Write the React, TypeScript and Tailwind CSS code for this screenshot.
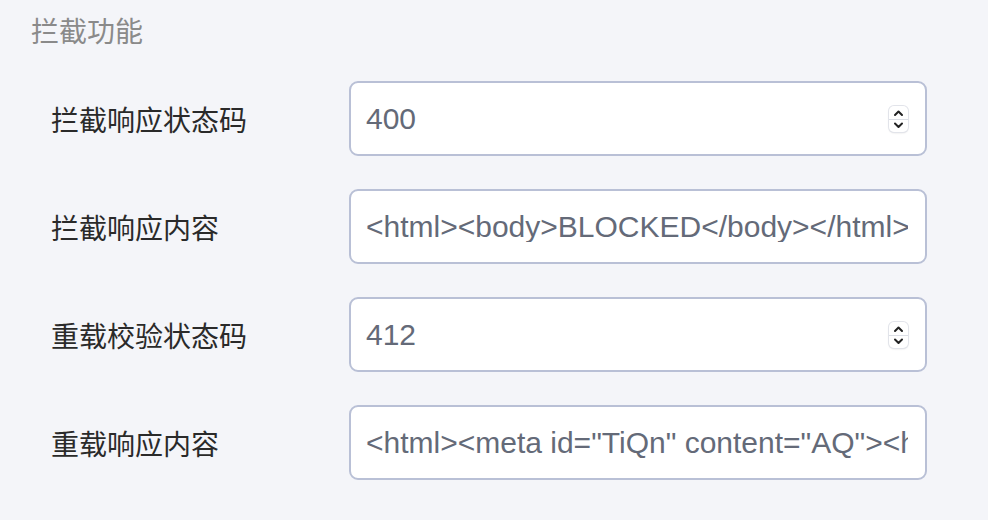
import React from "react";

const Spinner = () => (
  <div className="flex h-[26px] w-[19px] shrink-0 flex-col items-center justify-center rounded-[5px] bg-white shadow-[0_0_0_1px_#e2e4ea,0_1px_2px_rgba(0,0,0,0.15)]">
    <svg width="19" height="13" viewBox="0 0 19 13" className="block">
      <path d="M6 9 L9.5 5.5 L13 9" fill="none" stroke="#222" strokeWidth="2" strokeLinecap="round" strokeLinejoin="round" />
    </svg>
    <div className="h-px w-full bg-[#dcdfe6]" />
    <svg width="19" height="12" viewBox="0 0 19 12" className="block">
      <path d="M6 3.5 L9.5 7 L13 3.5" fill="none" stroke="#222" strokeWidth="2" strokeLinecap="round" strokeLinejoin="round" />
    </svg>
  </div>
);

const Row = ({ label, value, spin }: { label: string; value: string; spin?: boolean }) => (
  <div className="flex items-center">
    <div className="w-[349px] shrink-0 pl-[51px] text-[28px] leading-none text-[#2a2a2a]">{label}</div>
    <div className="flex h-[75px] w-[578px] shrink-0 items-center overflow-hidden rounded-[9px] border-2 border-[#b9c0d6] bg-white pl-[15px] pr-[17px]">
      {spin ? (
        <>
          <div className="flex-1 whitespace-nowrap font-['Liberation_Sans',sans-serif] text-[30px] leading-none text-[#646a78]">
            {value}
          </div>
          <Spinner />
        </>
      ) : (
        <div className="min-w-0 flex-1 overflow-hidden whitespace-nowrap font-['Liberation_Sans',sans-serif] text-[30px] leading-none text-[#646a78]">
          {value}
        </div>
      )}
    </div>
  </div>
);

export default function App() {
  return (
    <div className="h-[520px] w-[988px] overflow-hidden bg-[#f4f5f9] font-['Noto_Sans_CJK_SC','Liberation_Sans',sans-serif]">
      <div className="pl-[31px] pt-[15px] text-[28px] leading-[30px] text-[#8a8a8a]">拦截功能</div>
      <div className="mt-[36px] flex flex-col gap-[33px]">
        <Row label="拦截响应状态码" value="400" spin />
        <Row label="拦截响应内容" value="<html><body>BLOCKED</body></html>" />
        <Row label="重载校验状态码" value="412" spin />
        <Row label="重载响应内容" value={'<html><meta id="TiQn" content="AQ"><html><body>'} />
      </div>
    </div>
  );
}
